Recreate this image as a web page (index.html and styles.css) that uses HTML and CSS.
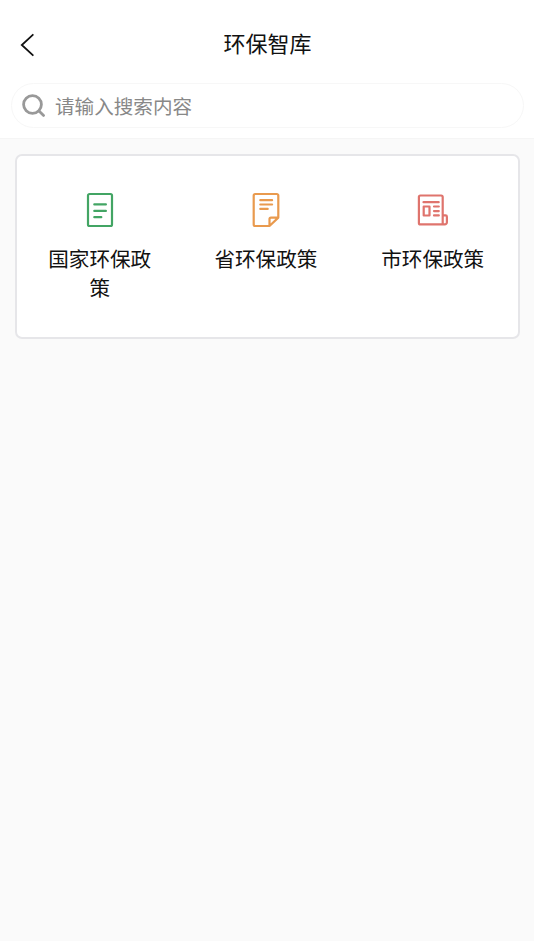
FILE: index.html
```
<!DOCTYPE html>
<html lang="zh-CN">
<head>
    <meta charset="UTF-8">
    <meta name="viewport" content="width=device-width, initial-scale=1.0">
    <title>环保智库</title>
    <link rel="stylesheet" href="styles.css">
</head>
<body>
    <header class="header">
        <a class="back" href="#" aria-label="返回">
            <svg width="16" height="24" viewBox="0 0 16 24"><path d="M13.8 1.8 2.8 12l11 10.2"/></svg>
        </a>
        <h1 class="title">环保智库</h1>
    </header>

    <form class="search">
        <svg class="search-icon" width="24" height="24" viewBox="0 0 24 24">
            <circle cx="10.5" cy="10.5" r="8.9"/>
            <path d="m17 17 4.6 4.4"/>
        </svg>
        <input class="search-input" type="text" placeholder="请输入搜索内容">
    </form>

    <main class="content">
        <div class="card">
            <a class="item" href="#">
                <svg class="icon green" width="36" height="36" viewBox="0 0 36 36">
                    <rect x="6" y="2" width="24" height="32" rx="1.5"/>
                    <path d="M12.3 12.4h11.6M12.3 18.9h11.6M12.3 25.2h7"/>
                </svg>
                <span class="label">国家环保政策</span>
            </a>
            <a class="item" href="#">
                <svg class="icon orange" width="36" height="36" viewBox="0 0 36 36">
                    <path d="M30.3 25.6V3.5A1.5 1.5 0 0 0 28.8 2H7.2a1.5 1.5 0 0 0-1.5 1.5v29A1.5 1.5 0 0 0 7.2 34h14.3zM21.5 34v-6.9a1.5 1.5 0 0 1 1.5-1.5h7.3"/>
                    <path d="M12.3 8.2h11.8M12.3 12.5h11.8M12.3 16.9h7.4"/>
                </svg>
                <span class="label">省环保政策</span>
            </a>
            <a class="item" href="#">
                <svg class="icon red" width="36" height="36" viewBox="0 0 36 36">
                    <path d="M29.8 32.4H5.4a1.5 1.5 0 0 1-1.5-1.5V5A1.5 1.5 0 0 1 5.4 3.5h20.8A1.5 1.5 0 0 1 27.7 5v27.4M27.7 23.4h2.9a1.3 1.3 0 0 1 1.3 1.3v5.6a2.1 2.1 0 0 1-2.1 2.1"/>
                    <path d="M8.5 10.2h15.2M19 14.5h4.8M19 19.1h4.8M19 23.4h4.8"/>
                    <rect x="8.7" y="14.5" width="5.8" height="9"/>
                </svg>
                <span class="label">市环保政策</span>
            </a>
        </div>
    </main>
</body>
</html>
```
FILE: styles.css
```
* {
    box-sizing: border-box;
}

body {
    margin: 0;
    background-color: #fff;
    color: #111;
    font-family: "Noto Sans CJK SC", sans-serif;
}

a {
    color: inherit;
    text-decoration: none;
}

svg {
    display: block;
    fill: none;
}

.header {
    display: grid;
    grid-template-columns: 61px 1fr 60px;
    align-items: center;
    height: 83px;
    padding-top: 6px;
}

.back {
    padding-left: 19px;
}

.back svg {
    stroke: #111;
    stroke-width: 1.8;
    stroke-linecap: round;
}

.title {
    margin: 0;
    padding-bottom: 6px;
    font-size: 22px;
    font-weight: 400;
    line-height: 32px;
    text-align: center;
}

.search {
    display: flex;
    align-items: center;
    gap: 9px;
    height: 45px;
    margin: 0 10px 10px 11px;
    padding: 0 10px;
    border: 1px solid #f7f7f7;
    border-radius: 23px;
}

.search-icon {
    stroke: #999;
    stroke-width: 2.8;
    stroke-linecap: round;
}

.search-input {
    flex: 1;
    padding: 0;
    border: none;
    outline: none;
    background: none;
    font-family: inherit;
    font-size: 19.6px;
}

.search-input::placeholder {
    color: #888;
}

.content {
    height: 803px;
    padding: 15px 14px 0 15px;
    border-top: 1px solid #f5f5f5;
    background-color: #fafafa;
}

.card {
    display: grid;
    grid-template-columns: 165.4px 167px 166.6px;
    height: 185px;
    padding-top: 36px;
    border: 2px solid #e6e6e9;
    border-radius: 7px;
    background-color: #fff;
}

.item {
    display: flex;
    flex-direction: column;
    align-items: center;
}

.icon {
    stroke-width: 2.2;
    stroke-linecap: round;
    stroke-linejoin: round;
}

.green {
    stroke: #43a564;
}

.orange {
    stroke: #e99a4e;
}

.red {
    stroke: #df746d;
}

.label {
    width: 110px;
    margin-top: 16px;
    font-size: 20.6px;
    line-height: 29px;
    text-align: center;
}
```
